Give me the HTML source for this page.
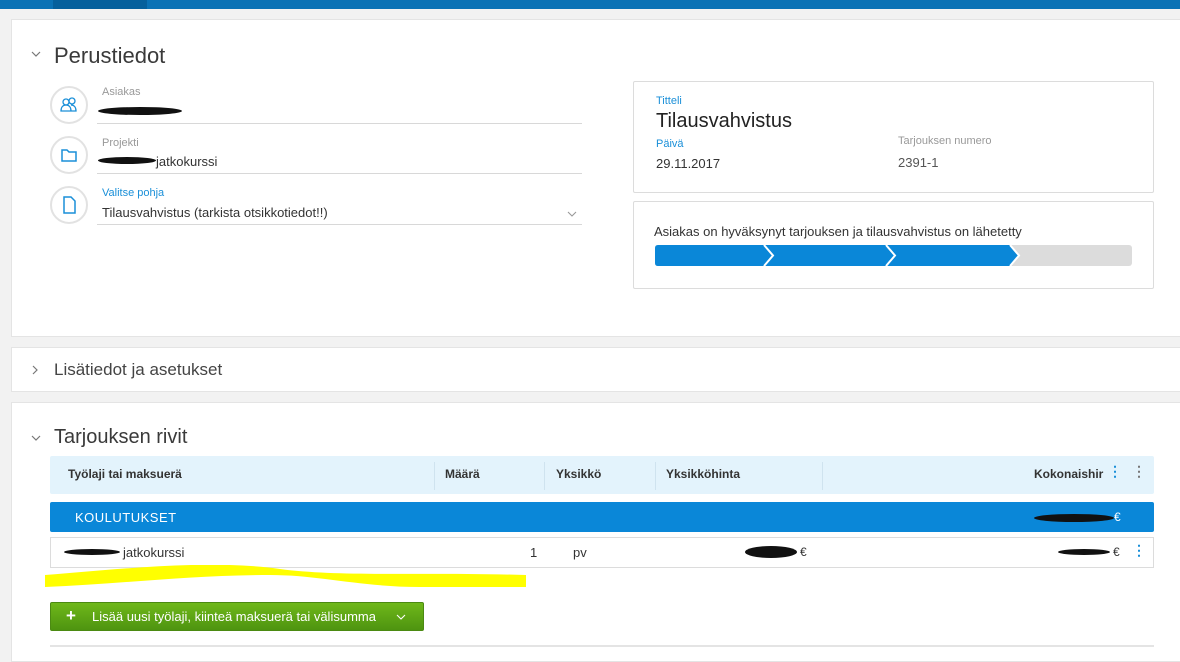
<!DOCTYPE html>
<html><head><meta charset="utf-8"><style>
*{margin:0;padding:0;box-sizing:border-box}
body{width:1180px;height:654px;background:#f2f2f2;font-family:"Liberation Sans",sans-serif;color:#333;position:relative;overflow:hidden}
.a{position:absolute}
.panel{position:absolute;left:11px;right:0;background:#fff;border:1px solid #e4e4e4;border-right:none}
.lbl{font-size:11px;color:#999}
.blbl{font-size:11px;color:#1a8fd8}
.circ{position:absolute;width:38px;height:38px;border:2px solid #e2e2e2;border-radius:50%;background:#fff}
.line{position:absolute;height:1px;background:#d8d8d8}
.scrib{position:absolute;background:#111;border-radius:50%}
</style></head><body>
<div class="a" style="left:0;top:0;width:1180px;height:9px;background:#0b72b5"></div>
<div class="a" style="left:53px;top:0;width:94px;height:9px;background:#06609c"></div>

<div class="panel" style="top:19px;height:318px"></div>
<svg class="a" style="left:31px;top:51px" width="10" height="6"><path d="M1 1l4 4 4-4" fill="none" stroke="#777" stroke-width="1.2"/></svg>
<div class="a" style="left:54px;top:43px;font-size:22px;color:#3a3a3a">Perustiedot</div>

<div class="circ" style="left:50px;top:86px"><svg width="34" height="34" viewBox="0 0 34 34"><g fill="none" stroke="#1a8fd8" stroke-width="1.3"><circle cx="14" cy="14" r="3"/><circle cx="20" cy="13" r="3"/><path d="M9 23c0-4 2-6 5-6s5 2 5 6zM19 17c3 0 5 2 5 6h-5"/></g></svg></div>
<div class="a lbl" style="left:102px;top:86px">Asiakas</div>
<div class="scrib" style="left:98px;top:107px;width:84px;height:8px"></div>
<div class="line" style="left:97px;top:123px;width:485px"></div>

<div class="circ" style="left:50px;top:136px"><svg width="34" height="34" viewBox="0 0 34 34"><path d="M10 12h5l2 2h7v9H10z" fill="none" stroke="#1a8fd8" stroke-width="1.5"/></svg></div>
<div class="a lbl" style="left:102px;top:137px">Projekti</div>
<div class="scrib" style="left:98px;top:157px;width:58px;height:7px"></div>
<div class="a" style="left:156px;top:154px;font-size:13px">jatkokurssi</div>
<div class="line" style="left:97px;top:173px;width:485px"></div>

<div class="circ" style="left:50px;top:186px"><svg width="34" height="34" viewBox="0 0 34 34"><path d="M12 9h7l4 4v12H12z" fill="none" stroke="#1a8fd8" stroke-width="1.5"/></svg></div>
<div class="a blbl" style="left:102px;top:187px">Valitse pohja</div>
<div class="a" style="left:102px;top:205px;font-size:13px">Tilausvahvistus (tarkista otsikkotiedot!!)</div>
<svg class="a" style="left:567px;top:211px" width="10" height="6"><path d="M1 1l4 4 4-4" fill="none" stroke="#999" stroke-width="1.1"/></svg>
<div class="line" style="left:97px;top:224px;width:485px"></div>

<div class="a" style="left:633px;top:81px;width:521px;height:112px;border:1px solid #dcdcdc;border-radius:2px"></div>
<div class="a blbl" style="left:656px;top:95px">Titteli</div>
<div class="a" style="left:656px;top:110px;font-size:20px;color:#222">Tilausvahvistus</div>
<div class="a blbl" style="left:656px;top:138px">Päivä</div>
<div class="a" style="left:656px;top:156px;font-size:13px">29.11.2017</div>
<div class="a lbl" style="left:898px;top:135px">Tarjouksen numero</div>
<div class="a" style="left:898px;top:155px;font-size:13px;color:#555">2391-1</div>

<div class="a" style="left:633px;top:201px;width:521px;height:88px;border:1px solid #dcdcdc;border-radius:2px"></div>
<div class="a" style="left:654px;top:224px;font-size:13px;color:#333">Asiakas on hyväksynyt tarjouksen ja tilausvahvistus on lähetetty</div>
<svg class="a" style="left:655px;top:245px" width="477" height="21" viewBox="0 0 477 21">
<rect x="0" y="0" width="477" height="21" rx="3" fill="#dcdcdc"/>
<path d="M3 0H355L364 10.5L355 21H3Q0 21 0 18V3Q0 0 3 0z" fill="#0a87d8"/>
<path d="M109 0l9 10.5-9 10.5M231 0l9 10.5-9 10.5M355 0l9 10.5-9 10.5" fill="none" stroke="#fff" stroke-width="2"/>
</svg>

<div class="panel" style="top:347px;height:45px"></div>
<svg class="a" style="left:32px;top:365px" width="6" height="10"><path d="M1 1l4 4-4 4" fill="none" stroke="#777" stroke-width="1.2"/></svg>
<div class="a" style="left:54px;top:360px;font-size:17px;color:#444">Lisätiedot ja asetukset</div>

<div class="panel" style="top:402px;height:260px"></div>
<svg class="a" style="left:31px;top:435px" width="10" height="6"><path d="M1 1l4 4 4-4" fill="none" stroke="#777" stroke-width="1.2"/></svg>
<div class="a" style="left:54px;top:426px;font-size:20px;color:#3a3a3a">Tarjouksen rivit</div>

<div class="a" style="left:50px;top:456px;width:1104px;height:38px;background:#e3f3fc;border-radius:2px"></div>
<div class="a" style="left:68px;top:467px;font-size:12px;font-weight:bold;color:#333">Työlaji tai maksuerä</div>
<div class="a" style="left:434px;top:462px;width:1px;height:28px;background:#cfe3ef"></div>
<div class="a" style="left:445px;top:467px;font-size:12px;font-weight:bold">Määrä</div>
<div class="a" style="left:544px;top:462px;width:1px;height:28px;background:#cfe3ef"></div>
<div class="a" style="left:556px;top:467px;font-size:12px;font-weight:bold">Yksikkö</div>
<div class="a" style="left:655px;top:462px;width:1px;height:28px;background:#cfe3ef"></div>
<div class="a" style="left:666px;top:467px;font-size:12px;font-weight:bold">Yksikköhinta</div>
<div class="a" style="left:822px;top:462px;width:1px;height:28px;background:#cfe3ef"></div>
<div class="a" style="left:1034px;top:467px;font-size:12px;font-weight:bold">Kokonaishir</div>
<div class="a" style="left:1108px;top:463px;font-size:14px;font-weight:bold;color:#1a8fd8">&#8942;</div>
<div class="a" style="left:1132px;top:463px;font-size:14px;font-weight:bold;color:#777">&#8942;</div>

<div class="a" style="left:50px;top:502px;width:1104px;height:30px;background:#0a87d8;border-radius:2px"></div>
<div class="a" style="left:75px;top:510px;font-size:13px;color:#fff;letter-spacing:.5px">KOULUTUKSET</div>
<div class="scrib" style="left:1034px;top:514px;width:80px;height:8px"></div>
<div class="a" style="left:1114px;top:510px;font-size:12px;color:#fff">€</div>

<div class="a" style="left:50px;top:537px;width:1104px;height:31px;border:1px solid #dcdcdc;background:#fff"></div>
<div class="scrib" style="left:64px;top:549px;width:56px;height:6px"></div>
<div class="a" style="left:123px;top:545px;font-size:13px">jatkokurssi</div>
<div class="a" style="left:530px;top:545px;font-size:13px">1</div>
<div class="a" style="left:573px;top:545px;font-size:13px">pv</div>
<div class="scrib" style="left:745px;top:546px;width:52px;height:12px"></div>
<div class="a" style="left:800px;top:545px;font-size:12px">€</div>
<div class="scrib" style="left:1058px;top:549px;width:52px;height:6px"></div>
<div class="a" style="left:1113px;top:545px;font-size:12px">€</div>
<div class="a" style="left:1132px;top:542px;font-size:14px;font-weight:bold;color:#1a8fd8">&#8942;</div>

<svg class="a" style="left:40px;top:565px" width="490" height="30" viewBox="0 0 490 30"><path d="M5 10C80 4 170 -6 240 4C300 12 380 7 486 10V22H380C320 22 280 10 230 10C150 10 80 19 5 22z" fill="#ffff00"/></svg>

<div class="a" style="left:50px;top:602px;width:374px;height:29px;background:linear-gradient(#6fb81a,#4e9410);border:1px solid #4b8a12;border-radius:2px"></div>
<div class="a" style="left:66px;top:606px;font-size:17px;color:#fff;font-weight:bold">+</div>
<div class="a" style="left:92px;top:609px;font-size:13px;color:#fff">Lisää uusi työlaji, kiinteä maksuerä tai välisumma</div>
<svg class="a" style="left:396px;top:614px" width="10" height="6"><path d="M1 1l4 4 4-4" fill="none" stroke="#fff" stroke-width="1.1"/></svg>
<div class="a" style="left:50px;top:645px;width:1104px;height:2px;background:#e4e4e4"></div>
</body></html>
